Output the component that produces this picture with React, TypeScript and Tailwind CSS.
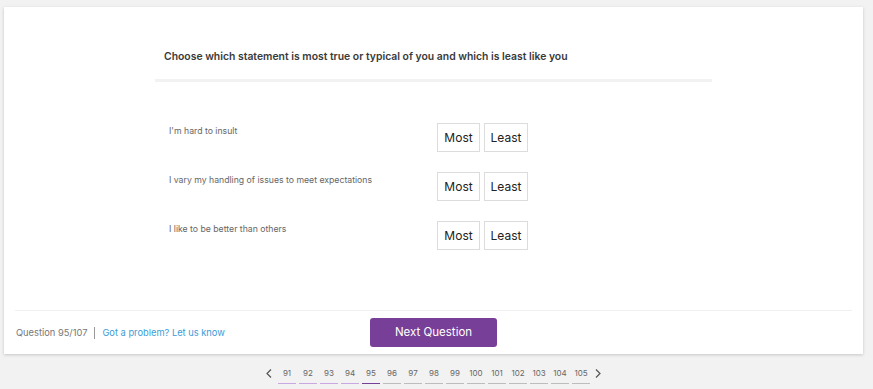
import { useState } from 'react';

const statements = [
  "I'm hard to insult",
  'I vary my handling of issues to meet expectations',
  'I like to be better than others',
];

const pages = [91, 92, 93, 94, 95, 96, 97, 98, 99, 100, 101, 102, 103, 104, 105];
const current = 95;

export default function App() {
  const [answers, setAnswers] = useState<Record<number, 'most' | 'least'>>({});

  const pick = (i: number, v: 'most' | 'least') => setAnswers({ ...answers, [i]: v });

  return (
    <div className="min-h-screen bg-[#f2f2f2] pt-[7px] font-['Inter',sans-serif]">
      <div className="ml-[4px] w-[859px]">
        <div className="h-[347px] bg-white shadow-[0_1px_3px_rgba(0,0,0,0.18)] flex flex-col">
          <div className="mx-auto w-[557px] pt-[42px]">
            <h2 className="pl-[9px] text-[10.4px] leading-[16px] font-semibold text-[#3a3a3a]">
              Choose which statement is most true or typical of you and which is least like you
            </h2>
            <div className="mt-[14px] h-[3px] bg-[#f2f2f2]" />

            <div className="mt-[41px] flex flex-col gap-[20px]">
              {statements.map((s, i) => (
                <div key={s} className="flex items-start">
                  <p className="w-[282px] pl-[14px] pt-[1px] text-[8.7px] leading-[14px] text-[#666]">{s}</p>
                  <div className="flex gap-[4px]">
                    <button
                      onClick={() => pick(i, 'most')}
                      className={`h-[29px] w-[43px] border border-[#dcdcdc] text-[12px] ${
                        answers[i] === 'most' ? 'bg-[#773f98] text-white' : 'bg-white text-[#222]'
                      }`}
                    >
                      Most
                    </button>
                    <button
                      onClick={() => pick(i, 'least')}
                      className={`h-[29px] w-[44px] border border-[#dcdcdc] text-[12px] ${
                        answers[i] === 'least' ? 'bg-[#773f98] text-white' : 'bg-white text-[#222]'
                      }`}
                    >
                      Least
                    </button>
                  </div>
                </div>
              ))}
            </div>
          </div>

          <div className="mt-auto mx-[11px] border-t border-[#f0f0f0] py-[7px] grid grid-cols-[1fr_auto_1fr] items-center">
            <div className="pl-[1px] flex items-center text-[9.3px] leading-[14px]">
              <span className="text-[#777]">Question 95/107</span>
              <span className="mx-[7px] h-[12px] w-px bg-[#999]" />
              <a className="text-[#3d9bd8]">Got a problem? Let us know</a>
            </div>
            <button className="h-[29px] w-[127px] rounded-[3px] bg-[#773f98] text-white text-[11.5px]">
              Next Question
            </button>
            <div />
          </div>
        </div>

        <div className="mt-[12px] flex items-start justify-center">
          <svg width="6" height="9" viewBox="0 0 6 9" className="mt-[3px] mr-[6px]">
            <polyline points="5,0.5 1,4.5 5,8.5" fill="none" stroke="#555" strokeWidth="1.2" />
          </svg>
          <div className="flex gap-[3px]">
            {pages.map((p) => (
              <div
                key={p}
                className={`w-[18px] h-[18px] flex items-start justify-center text-[8px] leading-[14px] text-[#666] border-b ${
                  p < current ? 'border-[#c9a7e0]' : p === current ? 'border-[#773f98]' : 'border-[#bdbdbd]'
                }`}
              >
                {p}
              </div>
            ))}
          </div>
          <svg width="6" height="9" viewBox="0 0 6 9" className="mt-[3px] ml-[5px]">
            <polyline points="1,0.5 5,4.5 1,8.5" fill="none" stroke="#555" strokeWidth="1.2" />
          </svg>
        </div>
      </div>
    </div>
  );
}
